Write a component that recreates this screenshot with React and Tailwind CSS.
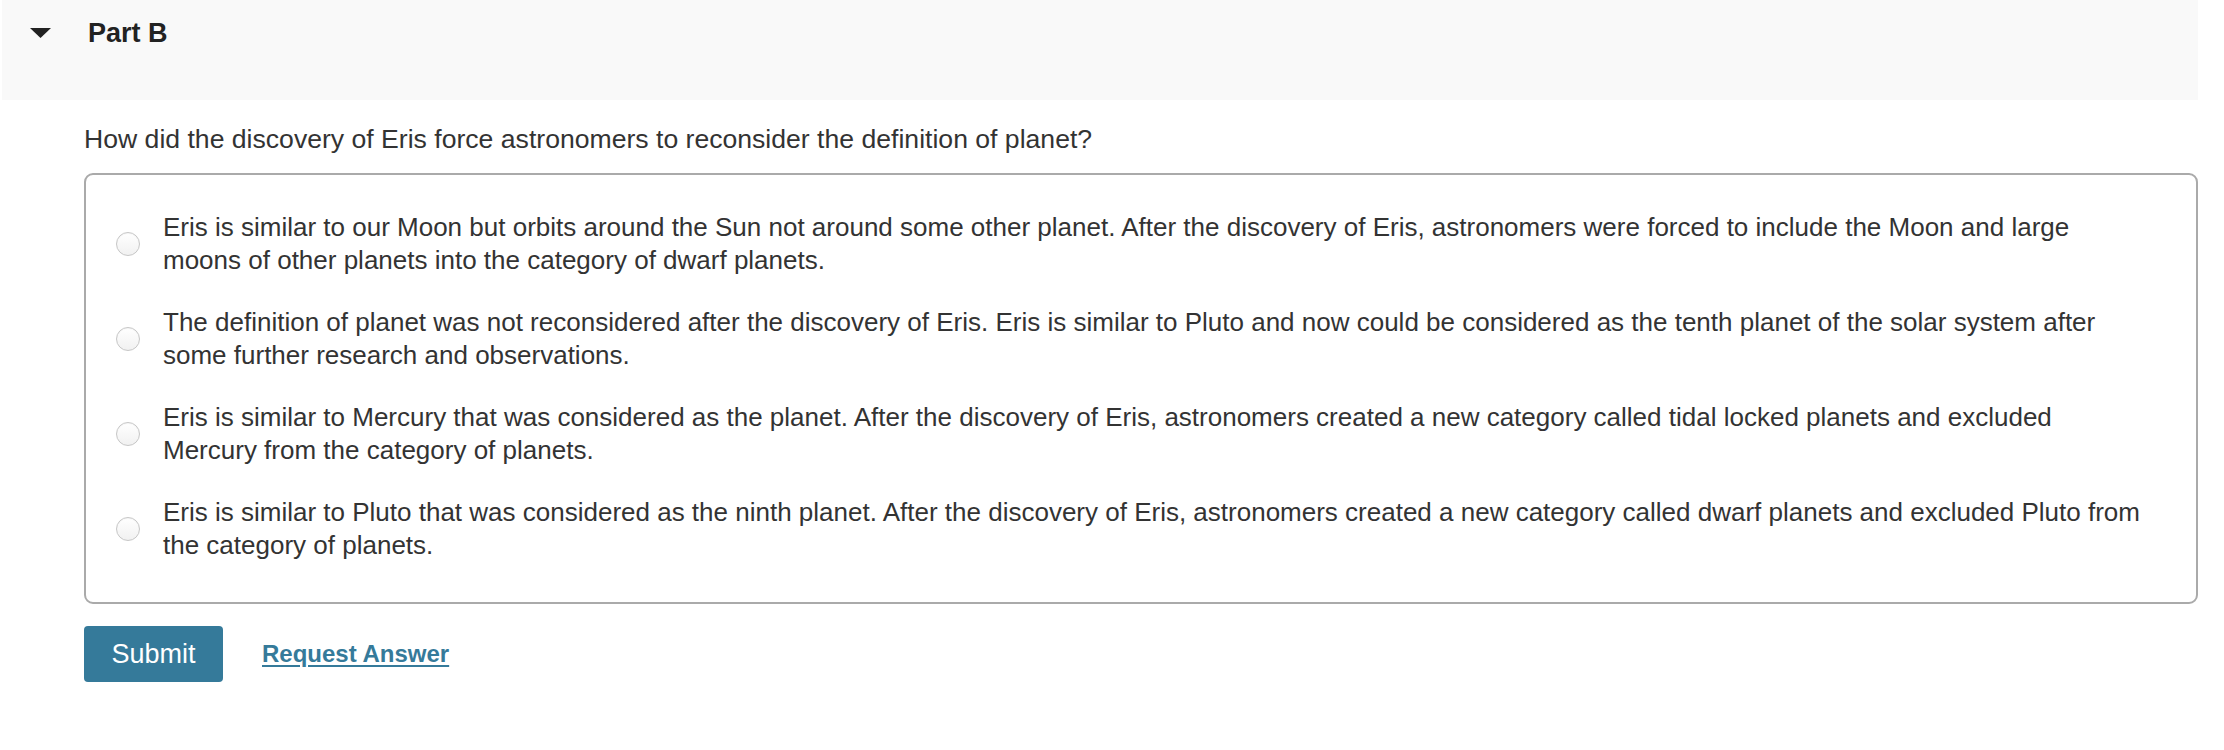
import { useState } from 'react';

// Part B: multiple choice question about Eris (each option as its two rendered lines)
const OPTIONS = [
    [
        'Eris is similar to our Moon but orbits around the Sun not around some other planet. After the discovery of Eris, astronomers were forced to include the Moon and large',
        'moons of other planets into the category of dwarf planets.',
    ],
    [
        'The definition of planet was not reconsidered after the discovery of Eris. Eris is similar to Pluto and now could be considered as the tenth planet of the solar system after',
        'some further research and observations.',
    ],
    [
        'Eris is similar to Mercury that was considered as the planet. After the discovery of Eris, astronomers created a new category called tidal locked planets and excluded',
        'Mercury from the category of planets.',
    ],
    [
        'Eris is similar to Pluto that was considered as the ninth planet. After the discovery of Eris, astronomers created a new category called dwarf planets and excluded Pluto from',
        'the category of planets.',
    ],
];

function Radio({ checked, onClick }) {
    return (
        <button
            type="button"
            onClick={onClick}
            className="shrink-0 w-[24px] h-[24px] rounded-full border border-[#c6c6c6] bg-gradient-to-b from-white to-[#f1f1f1] shadow-[inset_0_1px_1px_rgba(0,0,0,0.04)] flex items-center justify-center"
        >
            {checked && <span className="w-[10px] h-[10px] rounded-full bg-[#357a9a]" />}
        </button>
    );
}

export default function App() {
    const [selected, setSelected] = useState(null);

    return (
        <div className="min-h-screen bg-white font-['Liberation_Sans',Arial,sans-serif] text-[#333] pl-[2px] pr-[26px]">
            <div className="h-[100px] bg-[#f9f9f9] flex items-start pt-[19px]">
                <svg width="21" height="10" viewBox="0 0 21 10" className="ml-[28px] mt-[9px] shrink-0">
                    <polygon points="0,0 21,0 10.5,10" fill="#222" />
                </svg>
                <h2 className="ml-[37px] text-[27px] font-bold leading-[28px] text-[#222]">Part B</h2>
            </div>

            <div className="pl-[80px]">
                <p className="mt-[23px] pl-[2px] text-[26.6px] leading-[33px]">
                    How did the discovery of Eris force astronomers to reconsider the definition of planet?
                </p>

                <div className="mt-[17px] ml-[2px] border-2 border-[#aaa] rounded-[9px] pt-[36px] pb-[40px] pl-[30px] pr-[10px] flex flex-col gap-[29px]">
                    {OPTIONS.map((lines, i) => (
                        <label key={i} className="flex items-center gap-[23px] cursor-pointer">
                            <Radio checked={selected === i} onClick={() => setSelected(i)} />
                            <span className="text-[26px] leading-[33px]">
                                {lines.map((line) => (
                                    <span key={line} className="block whitespace-nowrap">{line}</span>
                                ))}
                            </span>
                        </label>
                    ))}
                </div>

                <div className="mt-[22px] ml-[2px] flex items-center gap-[39px]">
                    <button className="w-[139px] h-[56px] rounded-[4px] bg-[#357a9a] text-white text-[27px]">
                        Submit
                    </button>
                    <a href="#" className="text-[24px] font-bold text-[#357a9a] underline underline-offset-[3px]">
                        Request Answer
                    </a>
                </div>
            </div>
        </div>
    );
}
